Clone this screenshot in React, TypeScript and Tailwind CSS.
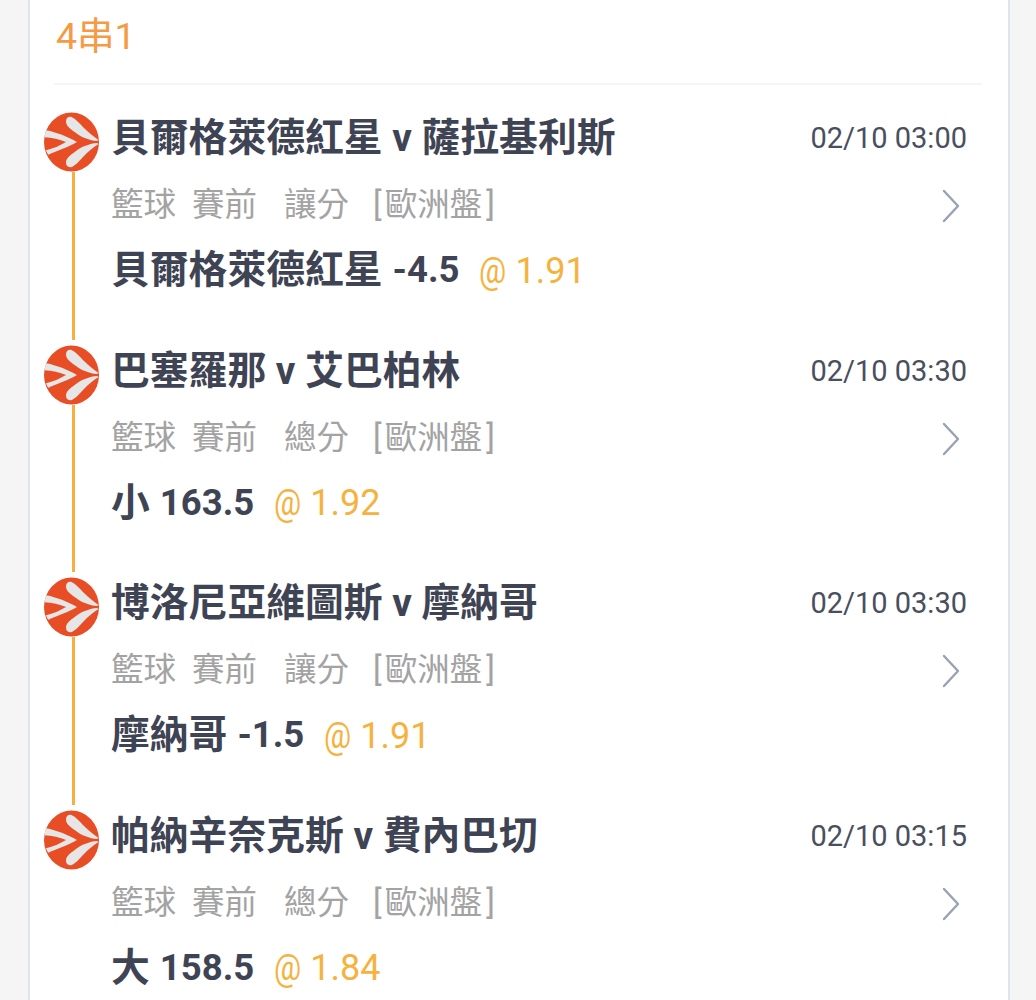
const rows = [
  { title: "貝爾格萊德紅星 v 薩拉基利斯", time: "02/10 03:00", market: "讓分", name: "貝爾格萊德紅星", value: "-4.5", odds: "1.91" },
  { title: "巴塞羅那 v 艾巴柏林", time: "02/10 03:30", market: "總分", name: "小", value: "163.5", odds: "1.92" },
  { title: "博洛尼亞維圖斯 v 摩納哥", time: "02/10 03:30", market: "讓分", name: "摩納哥", value: "-1.5", odds: "1.91" },
  { title: "帕納辛奈克斯 v 費內巴切", time: "02/10 03:15", market: "總分", name: "大", value: "158.5", odds: "1.84" },
];

function Logo() {
  return (
    <svg width="55" height="60" viewBox="0 0 55 60" className="shrink-0">
      <ellipse cx="27.5" cy="30" rx="27.5" ry="29.5" fill="#e84e26" />
      <g transform="translate(0 -0.4) scale(1 1.03)">
        <path d="M27 5 C32 7 36 12 40 16 C44 20 49 24 54.5 27.5 L53 28.5 C46 28 37 25 31 20 C27 17 22 14 22 9.5 C22 6.5 24 4.5 27 5 Z" fill="#e6e6e6" />
        <path d="M27 54 C32 52 36 47 40 43 C44 39 49 35 54.5 31.5 L53 30.5 C46 31 37 34 31 39 C27 42 22 45 22 49.5 C22 52.5 24 54.5 27 54 Z" fill="#e6e6e6" />
        <path d="M2.5 18 C12 20 24 24 33 29.5 C24 35 12 38 4.5 42 C3.5 41 2.5 39 2 37.5 C9 36 16 33 22 29.5 C16 27 8 25.5 0.5 25 C0.5 22.5 1.5 20 2.5 18 Z" fill="#e6e6e6" />
      </g>
    </svg>
  );
}

function Row({ r, last }: { r: (typeof rows)[number]; last: boolean }) {
  return (
    <div className="flex h-[232.5px]">
      <div className="flex w-[55px] shrink-0 flex-col items-center">
        <Logo />
        {!last && <div className="mb-[5px] ml-[3px] w-[3px] flex-1 bg-[#f5b041]" />}
      </div>
      <div className="ml-[13px] min-w-0 flex-1">
        <div className="flex h-[53px] items-center justify-between pr-[15px]">
          <span className="-ml-[1px] text-[38.8px] font-bold leading-none whitespace-nowrap text-[#3f4454]">{r.title}</span>
          <span className="text-[29px] leading-none whitespace-nowrap text-[#4a4f5e]">{r.time}</span>
        </div>
        <div className="mt-[14px] flex h-[53px] items-center justify-between pr-[22px] text-[32.5px] leading-none text-[#a3a3a3]">
          <div className="-ml-[1px] flex whitespace-nowrap">
            <span>籃球</span>
            <span className="ml-[16px]">賽前</span>
            <span className="ml-[27px]">{r.market}</span>
            <span className="ml-[24px]">[</span>
            <span className="ml-[3px] mr-[4px]">歐洲盤</span>
            <span>]</span>
          </div>
          <svg width="18" height="34" viewBox="0 0 18 34" fill="none" stroke="#98a2b3" strokeWidth="2.4" strokeLinecap="round" strokeLinejoin="round" className="mt-[1px]">
            <path d="M2 2 L16 17 L2 32" />
          </svg>
        </div>
        <div className="mt-[12px] -ml-[1px] flex h-[53px] items-center whitespace-nowrap">
          <span className="text-[38.8px] font-bold leading-none text-[#3f4454]">{r.name}</span>
          <span className="ml-[10px] text-[36.5px] font-bold leading-none text-[#3f4454]">{r.value}</span>
          <span className="ml-[20px] inline-block w-[26px] origin-left scale-x-[0.84] text-[36px] leading-none text-[#f5b23e]">@</span>
          <span className="ml-[10px] text-[36px] leading-none text-[#f5b23e]">{r.odds}</span>
        </div>
      </div>
    </div>
  );
}

export default function App() {
  return (
    <div className="h-[1000px] overflow-hidden bg-[#f5f5f5] pl-[28px] pr-[26px] font-['Roboto','Noto_Sans_CJK_TC',sans-serif]">
      <div className="h-full border-x-2 border-[#dfe5ee] bg-white pl-[14px] pr-[26px]">
        <div className="ml-[10px] flex h-[85px] items-start border-b-2 border-[#f3f5f9] pt-[13px]">
          <span className="ml-[2px] text-[37.5px] leading-[46px] text-[#f59a45]">4串1</span>
        </div>
        <div className="pt-[27px]">
          {rows.map((r, i) => (
            <Row key={i} r={r} last={i === rows.length - 1} />
          ))}
        </div>
      </div>
    </div>
  );
}
